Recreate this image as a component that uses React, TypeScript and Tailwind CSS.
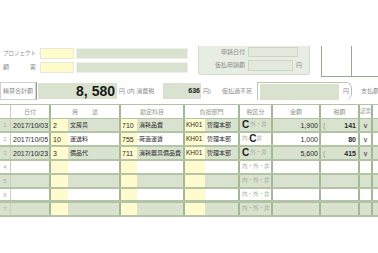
import React from "react";

type Line = {
  date?: string;
  c1?: string;
  n1?: string;
  c2?: string;
  n2?: string;
  c3?: string;
  n3?: string;
  mark?: "uchi" | "soto";
  amount?: string;
  paren?: boolean;
  tax?: string;
  v?: boolean;
};

const lines: Line[] = [
  { date: "2017/10/03", c1: "2", n1: "文房具", c2: "710", n2: "消耗品費", c3: "KH01", n3: "管理本部", mark: "uchi", amount: "1,900", paren: true, tax: "141", v: true },
  { date: "2017/10/05", c1: "10", n1: "運送料", c2: "755", n2: "荷造運賃", c3: "KH01", n3: "管理本部", mark: "soto", amount: "1,000", tax: "80", v: true },
  { date: "2017/10/23", c1: "3", n1: "備品代", c2: "711", n2: "消耗器具備品費", c3: "KH01", n3: "管理本部", mark: "uchi", amount: "5,600", paren: true, tax: "415", v: true },
  {},
  {},
  {},
  {},
];

function TaxMark({ mark }: { mark?: "uchi" | "soto" }) {
  if (mark === "uchi")
    return (
      <span className="flex items-center">
        <span className="mr-[1px] text-[10px] font-bold leading-none text-[#222]">C</span>
        <span className="text-[#a3b09b]">外・非</span>
      </span>
    );
  if (mark === "soto")
    return (
      <span className="flex items-center">
        <span className="text-[#a3b09b]">内-</span>
        <span className="text-[10px] font-bold leading-none text-[#222]">C</span>
        <span className="text-[#a3b09b]">非</span>
      </span>
    );
  return <span className="text-[#a3b09b]">内・外・非</span>;
}

function Row({ i, l }: { i: number; l: Line }) {
  const bg = i % 2 === 0 ? "bg-[#d9e1cf]" : "bg-white";
  const thick = i === 5 ? "border-b-[3px]" : "border-b-2";
  return (
    <div className={`flex h-[14px] ${thick} border-[#b3c4a5] text-[7px] leading-none text-[#2a2a2a] ${bg} *:shrink-0 *:overflow-hidden`}>
      <div className="flex w-[11px] items-center justify-center border-r border-[#c5d2b9] text-[6px] text-[#aab3a4]">{i + 1}</div>
      <div className="flex w-[40px] items-center border-r-2 border-[#a3b895] pl-[2px]">{l.date}</div>
      <div className="flex w-[17px] items-center bg-[#fffbcf] pl-[2px]">{l.c1}</div>
      <div className="flex w-[53px] items-center border-r-2 border-[#a3b895] pl-[2px] text-[6px]">{l.n1}</div>
      <div className="flex w-[16px] items-center bg-[#fffbcf] pl-[1px]">{l.c2}</div>
      <div className="flex w-[48px] items-center border-r-2 border-[#a3b895] pl-[2px] text-[6px]">{l.n2}</div>
      <div className="flex w-[20px] items-center bg-[#fffbcf] pl-[1px] text-[6.5px]">{l.c3}</div>
      <div className="flex w-[35px] items-center border-r-2 border-[#a3b895] pl-[2px] text-[6px]">{l.n3}</div>
      <div className="flex w-[33px] items-center border-r-2 border-[#a3b895] pl-[2px] text-[5.5px]">
        <TaxMark mark={l.mark} />
      </div>
      <div className="flex w-[48px] items-center justify-end border-r-2 border-[#a3b895] pr-[1px]">{l.amount}</div>
      <div className="flex w-[39px] items-center justify-between border-r-2 border-[#a3b895] px-[2px]">
        <span className="text-[#999]">{l.paren ? "(" : ""}</span>
        <span className="font-bold">{l.tax}</span>
      </div>
      <div className="flex w-[13px] items-center justify-center border-r-2 border-[#a3b895]">{l.v ? "v" : ""}</div>
      <div className="w-[10px]" />
    </div>
  );
}

export default function App() {
  return (
    <div
      className="relative h-[253px] w-[378px] overflow-hidden whitespace-nowrap bg-white"
      style={{ fontFamily: '"Liberation Sans", "Noto Sans CJK JP", sans-serif' }}
    >
      <div className="h-[46px]" />

      {/* top block */}
      <div className="flex h-[32px] *:shrink-0">
        <div className="flex w-[190px] flex-col gap-[3px] pt-[2px]">
          <div className="flex h-[11px] items-center *:shrink-0">
            <div className="w-[40px] pl-[3px] text-[5.5px] text-[#8b8b8b]">プロジェクト</div>
            <div className="h-[11px] w-[34px] border border-[#e8e8d8] bg-[#fffccc]" />
            <div className="ml-[2px] h-[11px] w-[112px] border border-[#eef1ea] bg-[#d9e1cf]" />
          </div>
          <div className="flex h-[11px] items-center *:shrink-0">
            <div className="flex w-[40px] justify-between pl-[3px] pr-[4px] text-[6px] text-[#8b8b8b]">
              <span>顧</span>
              <span>客</span>
            </div>
            <div className="h-[11px] w-[34px] border border-[#e8e8d8] bg-[#fffccc]" />
            <div className="ml-[2px] h-[11px] w-[112px] border border-[#eef1ea] bg-[#d9e1cf]" />
          </div>
        </div>

        <div className="ml-[8px] flex h-[29px] w-[112px] flex-col gap-[3px] rounded-b-[3px] border-x border-b border-[#d3dccb] bg-[#e7ede2] pt-[1px]">
          <div className="flex h-[10px] items-center *:shrink-0">
            <div className="w-[49px] pr-[3px] text-right text-[6px] text-[#8b8b8b]">申請日付</div>
            <div className="h-[10px] w-[50px] border border-[#cdd6c5] bg-[#e3eadd]" />
          </div>
          <div className="flex h-[11px] items-center *:shrink-0">
            <div className="w-[49px] pr-[3px] text-right text-[6px] text-[#8b8b8b]">仮払申請額</div>
            <div className="h-[11px] w-[45px] border border-[#cdd6c5] bg-[#e3eadd]" />
            <div className="ml-[3px] text-[6px] text-[#8b8b8b]">円</div>
          </div>
        </div>

        <div className="ml-[11px] flex h-[31px] w-[60px] border-b border-l border-[#94ad82]">
          <div className="w-[30px] border-r border-[#94ad82]" />
        </div>
      </div>

      {/* total row */}
      <div className="mt-[4px] flex h-[18px] items-center text-[6px] text-[#8b8b8b] *:shrink-0">
        <div className="flex h-[18px] w-[36px] items-center border border-[#d0d0d0] pl-[2px]">精算合計額</div>
        <div className="h-[18px] w-[1px] bg-[#9a9a9a]" />
        <div className="ml-[1px] flex h-[16px] w-[79px] items-center justify-end bg-[#d9e1cf] pr-[2px] text-[14px] font-bold text-[#1a1a1a]">
          8, 580
        </div>
        <div className="ml-[2px] w-[44px]">円 (内 消費税</div>
        <div className="flex h-[16px] w-[38px] items-center justify-end bg-[#d9e1cf] pr-[1px] text-[7px] font-bold text-[#1a1a1a]">
          636
        </div>
        <div className="ml-[2px] w-[19px]">円)</div>
        <div className="w-[35px]">仮払過不足</div>
        <div className="flex h-[18px] w-[95px] items-center rounded-r-[6px] border-x border-t border-[#b9c7ad] pl-[2px]">
          <div className="h-[16px] w-[79px] bg-[#d9e1cf]" />
          <div className="ml-[4px]">円</div>
        </div>
        <div className="ml-[9px]">支払額</div>
      </div>

      {/* table */}
      <div className="mt-[4px]">
        <div className="flex h-[15px] border-y border-[#b3c4a5] bg-white text-[6px] leading-none text-[#8c9a84] *:shrink-0">
          <div className="w-[11px] border-r border-[#c5d2b9]" />
          <div className="flex w-[40px] items-center justify-center border-r-2 border-[#a3b895]">日付</div>
          <div className="flex w-[70px] items-center justify-center gap-[14px] border-r-2 border-[#a3b895]">
            <span>用</span>
            <span>途</span>
          </div>
          <div className="flex w-[64px] items-center justify-center border-r-2 border-[#a3b895]">勘定科目</div>
          <div className="flex w-[55px] items-center justify-center border-r-2 border-[#a3b895]">負担部門</div>
          <div className="flex w-[33px] items-center justify-center border-r-2 border-[#a3b895]">税区分</div>
          <div className="flex w-[48px] items-center justify-center border-r-2 border-[#a3b895]">金額</div>
          <div className="flex w-[39px] items-center justify-center border-r-2 border-[#a3b895]">税額</div>
          <div className="flex w-[13px] items-center justify-center overflow-hidden border-r-2 border-[#a3b895] text-[5.5px]">証票</div>
          <div className="w-[10px]" />
        </div>
        {lines.map((l, i) => (
          <Row key={i} i={i} l={l} />
        ))}
      </div>
    </div>
  );
}
